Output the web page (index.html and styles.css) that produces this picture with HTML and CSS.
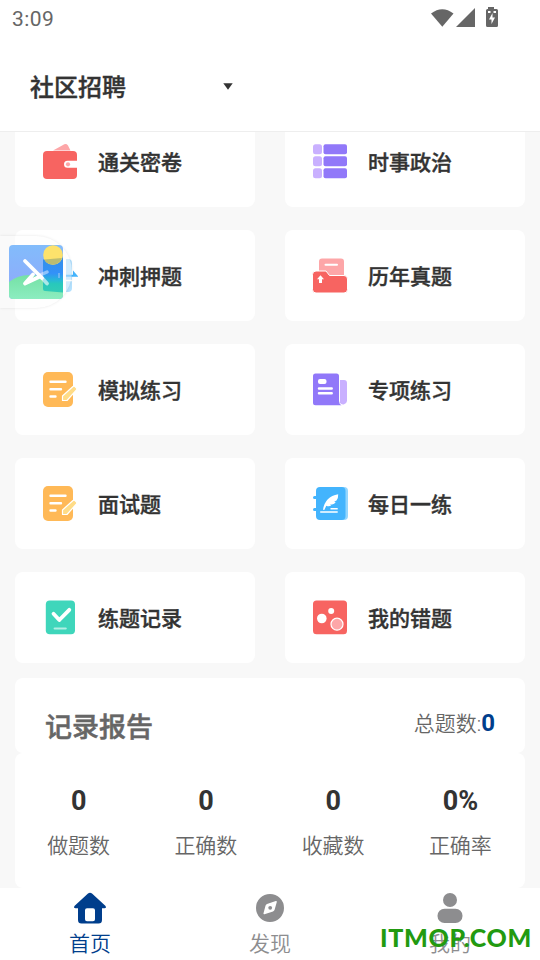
FILE: index.html
```html
<!DOCTYPE html>
<html lang="zh-CN">
<head>
<meta charset="utf-8">
<title>社区招聘</title>
<link rel="stylesheet" href="styles.css">
</head>
<body>
<div class="app">
  <div class="status">
    <span class="clock">3:09</span>
    <svg class="status-icons" width="70" height="24" viewBox="0 0 70 24" fill="#666">
      <path d="M1 7.2Q12.300 -2.400 23.500 7.200L12.300 21.500Z" transform="translate(0 2) scale(1 .92)"/>
      <path d="M45 3V22H26Z"/>
      <path fill-rule="evenodd" d="M58 2h6v2h2.500a1.500 1.500 0 0 1 1.500 1.500v15a1.500 1.500 0 0 1-1.500 1.500h-9a1.500 1.500 0 0 1-1.500-1.500v-15A1.500 1.500 0 0 1 57.500 4H58ZM58 6v2h2.500V6ZM63.500 6v2H66V6ZM62.500 8 59 14.500h2.500v4.500L65 12.500h-2.500Z"/>
    </svg>
  </div>
  <header class="header">
    <h1 class="title">社区招聘</h1>
    <svg width="10" height="7" viewBox="0 0 10 7"><path fill="#333" d="M.3.300H9.700L5 6.700Z"/></svg>
  </header>
  <main class="content">
    <div class="grid">
      <div class="card"><svg class="icon" viewBox="0 0 36 36"><path fill="#fda6a8" d="M11 6.500 21 1Q24-1 26 1.500L28.500 6.500Z"/><rect x="1" y="7" width="34" height="28" rx="4" fill="#f76461"/><path fill="#fff" d="M36 16.800H25.500a3.500 3.500 0 0 0 0 7H36Z"/><circle cx="26" cy="20.300" r="2.100" fill="#fda6a8"/></svg><span>通关密卷</span></div>
      <div class="card"><svg class="icon" viewBox="0 0 36 36"><g fill="#c9b0ff"><rect x="1" y=".2" width="9" height="10" rx="2.500"/><rect x="1" y="12.200" width="9" height="10" rx="2.500"/><rect x="1" y="24.200" width="9" height="10" rx="2.500"/></g><g fill="#9178f9"><rect x="11.500" y=".2" width="23.500" height="10" rx="2"/><rect x="11.500" y="12.200" width="23.500" height="10" rx="2"/><rect x="11.500" y="24.200" width="23.500" height="10" rx="2"/></g></svg><span>时事政治</span></div>
      <div class="card"><svg class="icon" viewBox="0 0 36 36"><path fill="#b4e1fe" d="M24 1h2a4 4 0 0 1 4 4v25a4 4 0 0 1-4 4h-2Z"/><path stroke="#fff" stroke-width="1.500" d="M24 22.500h6"/><path fill="#43b4fd" d="M31 12.500 36.500 18.800H24v-2h7Z"/></svg><span>冲刺押题</span></div>
      <div class="card"><svg class="icon" viewBox="0 0 36 36"><rect x="7" y=".5" width="25" height="22" rx="3" fill="#fda6a8"/><rect x="12.500" y="5.700" width="13.500" height="2" rx="1" fill="#fff"/><path fill="#f76461" stroke="#fff" stroke-width="1" d="M4 13h10l3.500 4.500H32a3.500 3.500 0 0 1 3.500 3.500v10.500A3.500 3.500 0 0 1 32 35H4A3.500 3.500 0 0 1 .5 31.500V16.500A3.500 3.500 0 0 1 4 13Z"/><path fill="#fff" d="m8.500 17.300 3.500 4H10V25H7v-3.700H5Z"/></svg><span>历年真题</span></div>
      <div class="card"><svg class="icon" viewBox="0 0 36 36"><use href="#note"/></svg><span>模拟练习</span></div>
      <div class="card"><svg class="icon" viewBox="0 0 36 36"><path fill="#c9b0ff" d="M28 8h4a3 3 0 0 1 3 3v18a4 4 0 0 1-7 2Z"/><path fill="#9178f9" d="M3.500 1.500h21A2.500 2.500 0 0 1 27 4v25q0 3 2.500 4.300H3.500A2.500 2.500 0 0 1 1 30.800V4a2.500 2.500 0 0 1 2.500-2.500Z"/><rect x="6" y="7" width="8.500" height="5" rx="2" fill="#fff"/><path stroke="#fff" stroke-width="2.500" stroke-linecap="round" d="M7 16.600h12.700M7 21.300h12.700"/></svg><span>专项练习</span></div>
      <div class="card"><svg class="icon" viewBox="0 0 36 36"><use href="#note"/></svg><span>面试题</span></div>
      <div class="card"><svg class="icon" viewBox="0 0 36 36"><rect x="22" y="1" width="14" height="33" rx="4" fill="#94d6fe"/><rect x="4" y="1" width="29.500" height="33" rx="4" fill="#43b4fd"/><path stroke="#43b4fd" stroke-width="3" stroke-linecap="round" d="M2.500 11.500h3M2.500 23.500h3"/><path fill="#fff" d="M26.200 8.200Q26.400 12 24.500 14.500L22 15.800l1.800.2Q22.500 18 20 18.500l-2.200.2 1.500.8Q17 21 14.300 19.800L12.300 24l-1.300-.3Q13 10.500 26.200 8.200Z"/><path stroke="#fff" stroke-width="1.600" d="M8.200 26h17.500M18.500 22.800h7.200"/></svg><span>每日一练</span></div>
      <div class="card"><svg class="icon" viewBox="0 0 36 36"><rect x="3.800" y=".5" width="29.200" height="33.800" rx="4" fill="#3fd6bb"/><path stroke="#fff" stroke-width="3.800" stroke-linecap="round" stroke-linejoin="round" fill="none" d="m11.500 13.800 5.800 6.200L27.300 9.800"/><path stroke="#b2eee4" stroke-width="2.200" stroke-linecap="round" d="M12.700 28.500h11"/></svg><span>练题记录</span></div>
      <div class="card"><svg class="icon" viewBox="0 0 36 36"><rect x="1" y=".5" width="34" height="33.800" rx="3.500" fill="#f76461"/><circle cx="9.800" cy="18.500" r="4.800" fill="#fff"/><circle cx="19.200" cy="11" r="3" fill="#fff"/><circle cx="25" cy="24.200" r="6" fill="#fda6a8" stroke="#fff" stroke-width="1.200"/></svg><span>我的错题</span></div>
    </div>
    <section class="report">
      <h2 class="report-title">记录报告</h2>
      <div class="total">总题数:<b>0</b></div>
    </section>
    <section class="stats">
      <div class="stat"><b>0</b><span>做题数</span></div>
      <div class="stat"><b>0</b><span>正确数</span></div>
      <div class="stat"><b>0</b><span>收藏数</span></div>
      <div class="stat"><b>0%</b><span>正确率</span></div>
    </section>
  </main>
  <nav class="nav">
    <a class="tab active"><svg class="tab-icon" viewBox="0 0 36 36"><path fill="#003e8c" fill-rule="evenodd" d="M16 3.500Q18 2 20 3.500L33.300 15.800Q35 18 32.500 18.300H30V30q0 3.500-3.500 3.500h-17Q6 33.500 6 30V18.300H3.500Q1 18 2.700 15.800ZM15 18.200q-2 0-2 2v9q0 2 2 2h6q2 0 2-2v-9q0-2-2-2Z"/></svg>首页</a>
    <a class="tab"><svg class="tab-icon" viewBox="0 0 36 36"><path fill="#8d8d8f" fill-rule="evenodd" d="M18 4a14 14 0 1 0 0 28 14 14 0 0 0 0-28ZM23.800 11q1.200-.2 1 1L22.600 19.800Q22.200 21 21 21.500L12.500 24.300q-1.300.3-1-1L13.500 15.800q.3-1.200 1.500-1.700Z"/><circle cx="18.200" cy="17.800" r="1.900" fill="#8d8d8f"/></svg>发现</a>
    <a class="tab"><svg class="tab-icon" viewBox="0 0 36 36" fill="#8d8d8f"><circle cx="18" cy="10" r="7"/><rect x="5.500" y="18.700" width="25" height="14.300" rx="7"/></svg>我的</a>
  </nav>
  <div class="floater">
    <svg width="54" height="54" viewBox="0 0 54 54"><defs><linearGradient id="sky" x2="0" y2="1"><stop stop-color="#82bcfb"/><stop offset="1" stop-color="#91a6fb"/></linearGradient><linearGradient id="hill" x2="0" y2="1"><stop stop-color="#75e1a5"/><stop offset="1" stop-color="#8cedc0"/></linearGradient><linearGradient id="door" x2="0" y2="1"><stop stop-color="#348fe8"/><stop offset=".45" stop-color="#3391f8"/><stop offset=".65" stop-color="#28b8d6"/><stop offset=".75" stop-color="#28c8bb"/><stop offset="1" stop-color="#33ccb5"/></linearGradient><clipPath id="frame"><rect width="54" height="54" rx="4"/></clipPath></defs>
      <g clip-path="url(#frame)"><rect width="54" height="54" fill="url(#sky)"/><path fill="url(#hill)" d="M0 37Q9 30 20 30q17 0 34 13v11H0Z"/><path fill="url(#door)" d="M34 14.500 54 12.500v35L36 46q-2 0-2-2Z"/><circle cx="44" cy="10" r="9.800" fill="#fde26c"/><path fill="#bcbc70" d="M35.200 14.400 53 12.900A9.800 9.800 0 0 1 35.200 14.400Z"/><path fill="none" stroke="#fff" stroke-opacity=".45" stroke-width="3.500" stroke-linecap="round" d="M30 30.500 38 27"/><path fill="none" stroke="#fff" stroke-opacity=".6" stroke-width="3.800" stroke-linecap="round" d="m33 33 5 5.500"/><path fill="none" stroke="#fff" stroke-width="3.800" stroke-linecap="round" stroke-linejoin="round" d="m16 16 17 17M24 29.500 16 38.500l15-7"/><path stroke="#81bbf3" stroke-width="1.500" d="M50 28v5"/></g></svg>
  </div>
  <div class="watermark">ITMOP.COM</div>
  <svg width="0" height="0" class="defs"><symbol id="note" viewBox="0 0 36 36"><rect x="1" y="0" width="30" height="35" rx="5" fill="#ffb957"/><path stroke="#fff" stroke-width="2.400" stroke-linecap="round" d="M8.500 9.800h15M8.500 17.300h10.500M8.500 24.500h5"/><path fill="#ffdc87" stroke="#fff" stroke-width="1.200" stroke-linejoin="round" d="M20.500 28.500v-4.500L31 14.500q1-.8 2 0l1.500 1.700q.7.800 0 1.600L25 28.500Z"/></symbol></svg>
</div>
</body>
</html>
```
FILE: styles.css
```css
* { box-sizing: border-box; }
body {
  margin: 0;
  background: #f8f8f8;
  color: #333;
  font-family: Roboto, "Noto Sans CJK SC", sans-serif;
}
.app {
  position: relative;
  display: flex;
  flex-direction: column;
  width: 540px;
  height: 960px;
  overflow: hidden;
}
.status {
  display: flex;
  justify-content: space-between;
  height: 42px;
  padding: 5px 40px 0 12px;
  background: #fff;
}
.clock { font-size: 21px; line-height: 29px; letter-spacing: .4px; color: #666; }
.status-icons { display: block; }
.header {
  display: flex;
  align-items: center;
  justify-content: space-between;
  height: 90px;
  padding: 2px 307px 0 30px;
  border-bottom: 1px solid #eee;
  background: #fff;
}
.title { margin: 0; font-size: 24px; font-weight: 500; line-height: 36px; -webkit-text-stroke: .4px; }
.header svg { margin-top: -3px; }
.content { flex: none; height: 756px; overflow: hidden; }
.grid {
  display: grid;
  grid-template-columns: 240px 240px;
  grid-auto-rows: 91px;
  gap: 23px 30px;
  margin: -16px 15px 15px;
}
.card {
  display: flex;
  align-items: center;
  gap: 20px;
  padding-left: 27px;
  border-radius: 8px;
  background: #fff;
  font-size: 21px;
  font-weight: 500;
  -webkit-text-stroke: .4px;
}
.card span { padding-bottom: 2px; }
.icon { width: 36px; height: 36px; flex: none; }
.report {
  display: flex;
  justify-content: space-between;
  height: 75px;
  margin: 0 15px;
  padding: 29px 30px 0 30px;
  border-radius: 8px;
  background: #fff;
  color: #666;
}
.report-title { margin: 0; font-size: 27px; font-weight: 500; line-height: 43px; -webkit-text-stroke: .5px; }
.total { font-size: 21px; font-weight: 350; line-height: 32px; }
.total b { font-size: 24px; font-weight: 700; color: #003e8c; }
.stats {
  display: flex;
  height: 135px;
  margin: 0 15px;
  padding: 32px 1px 0 0;
  border-radius: 8px;
  background: #fff;
}
.stat {
  flex: 1;
  display: flex;
  flex-direction: column;
  align-items: center;
  gap: 13px;
}
.stat b { font-size: 27px; line-height: 33px; }
.stat span { font-size: 21px; line-height: 30px; font-weight: 350; color: #666; }
.nav { display: flex; height: 72px; flex: none; background: #fff; }
.tab {
  flex: 1;
  display: flex;
  flex-direction: column;
  align-items: center;
  padding-top: 2px;
  font-size: 21px;
  font-weight: 350;
  line-height: 36px;
  color: #8d8d8f;
}
.tab-icon { width: 36px; height: 36px; flex: none; }
.active { color: #003e8c; }
.floater {
  position: absolute;
  left: 0;
  top: 236px;
  width: 72px;
  height: 72px;
  padding: 9px;
  border-radius: 0 36px 36px 0;
  background: rgba(252, 252, 252, .4);
  box-shadow: 0 0 3px rgba(0, 0, 0, .1);
}
.floater svg { display: block; }
.watermark {
  position: absolute;
  left: 380px;
  top: 919px;
  font: 900 25px/36px Lato, sans-serif;
  letter-spacing: .7px;
  color: #229a10;
}
.defs { position: absolute; }
```
